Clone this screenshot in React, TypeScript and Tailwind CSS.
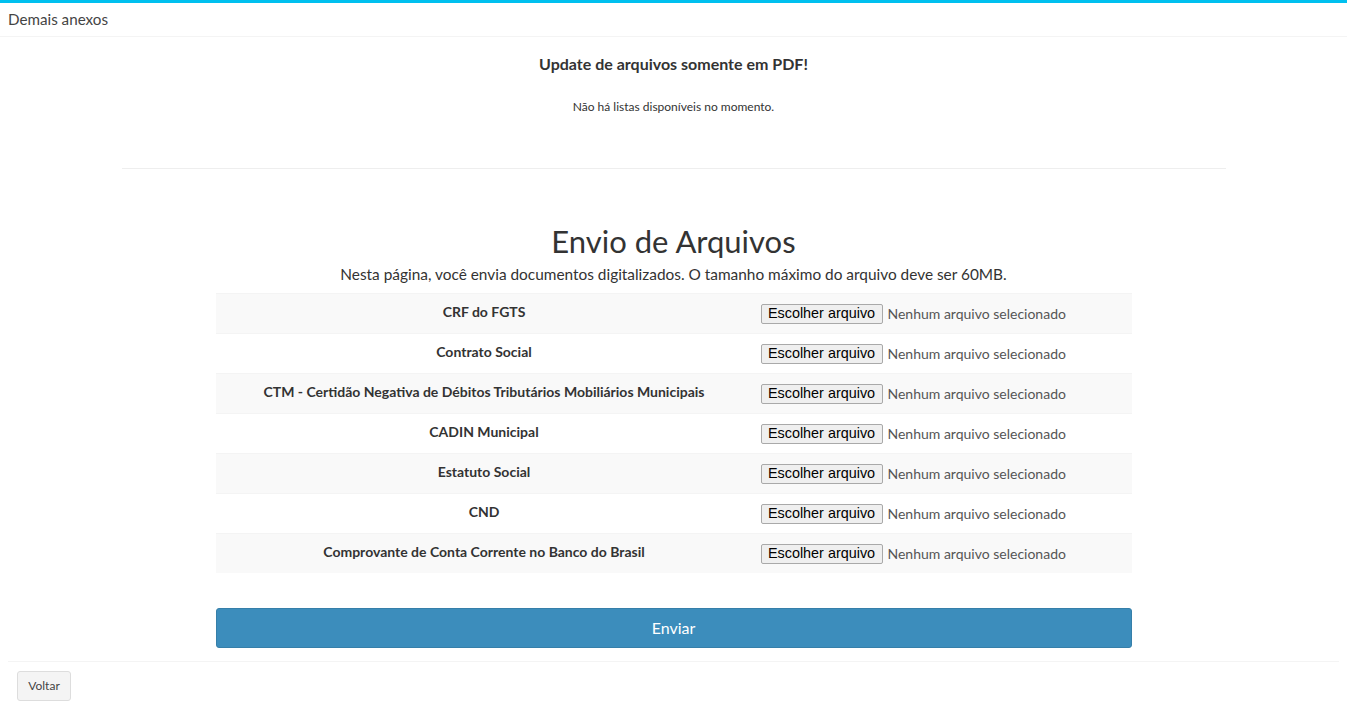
import React from "react";

const docs = [
  "CRF do FGTS",
  "Contrato Social",
  "CTM - Certidão Negativa de Débitos Tributários Mobiliários Municipais",
  "CADIN Municipal",
  "Estatuto Social",
  "CND",
  "Comprovante de Conta Corrente no Banco do Brasil",
];

const FileRow: React.FC<{ label: string; striped: boolean }> = ({ label, striped }) => (
  <div
    className={`flex h-10 items-center border-t border-[#f4f4f4] ${
      striped ? "bg-[#f9f9f9]" : "bg-white"
    }`}
  >
    <div className="w-[537px] text-center text-[14px] font-bold text-[#333] leading-5 -mt-1">
      {label}
    </div>
    <div className="flex items-center pl-2">
      <span className="flex h-[20px] w-[122px] items-center justify-center rounded-[2px] border border-[#a9a9a9] bg-[#efefef] font-['Liberation_Sans',Arial,sans-serif] text-[14.4px] text-black">
        Escolher arquivo
      </span>
      <span className="ml-[5px] text-[14px] text-[#555]">Nenhum arquivo selecionado</span>
    </div>
  </div>
);

export default function App() {
  return (
    <div className="min-h-screen bg-white font-['Lato','Open_Sans',sans-serif] text-[#333]">
      <div className="border-t-[3px] border-[#00c0ef]">
        <div className="flex h-[34px] items-center border-b border-[#f4f4f4] px-2">
          <h3 className="text-[15.2px] leading-none text-[#444]">Demais anexos</h3>
        </div>

        <div className="px-2">
          <div className="pt-[17px] text-center">
            <h4 className="text-[16px] font-bold leading-5 text-[#333]">
              Update de arquivos somente em PDF!
            </h4>
            <p className="mt-[23px] text-[12px] leading-5 text-[#333]">
              Não há listas disponíveis no momento.
            </p>
          </div>

          <hr className="mx-auto mt-[51px] w-[1104px] border-t border-[#eee]" />

          <div className="mt-[50px] text-center">
            <h1 className="text-[31px] font-normal leading-[44px] text-[#333]">Envio de Arquivos</h1>
            <p className="text-[15.4px] leading-[22px] text-[#333]">
              Nesta página, você envia documentos digitalizados. O tamanho máximo do arquivo deve ser
              60MB.
            </p>
          </div>

          <div className="mx-auto mt-[8px] w-[916px]">
            {docs.map((d, i) => (
              <FileRow key={d} label={d} striped={i % 2 === 0} />
            ))}
          </div>

          <div className="mx-auto mt-[35px] w-[916px]">
            <button className="h-10 w-full rounded-[3px] border border-[#367fa9] bg-[#3c8dbc] text-[16px] text-white">
              Enviar
            </button>
          </div>
        </div>

        <div className="mx-2 mt-[13px] border-t border-[#f4f4f4] px-[9px] pt-[9px]">
          <button className="h-[30px] w-[54px] rounded-[3px] border border-[#ddd] bg-[#f4f4f4] text-[12px] text-[#444]">
            Voltar
          </button>
        </div>
      </div>
    </div>
  );
}
